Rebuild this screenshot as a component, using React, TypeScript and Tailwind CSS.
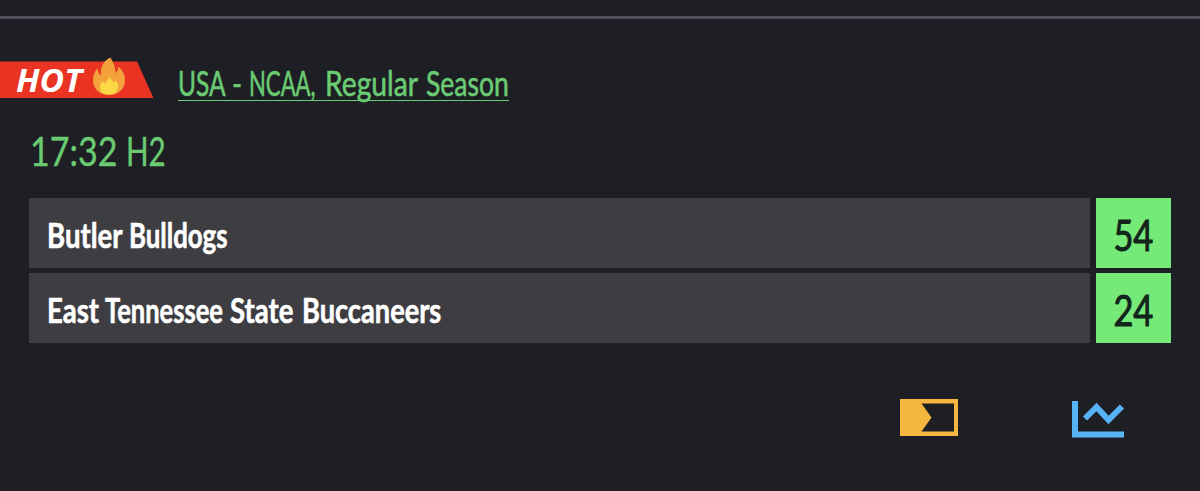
import React from 'react'

//Each word has its own slot (start to start) and its own condensing
type Word = { text: string, slot: string, scale: string }

const league: Word[] = [
  { text: "USA", slot: "w-[54px]", scale: "scale-x-[0.72]" },
  { text: "-", slot: "w-[17px]", scale: "scale-x-[0.8]" },
  { text: "NCAA,", slot: "w-[76px]", scale: "scale-x-[0.65]" },
  { text: "Regular", slot: "w-[101px]", scale: "scale-x-[0.83]" },
  { text: "Season", slot: "w-[83px]", scale: "scale-x-[0.78]" }
]

const clock: Word[] = [
  { text: "17:32", slot: "w-[96px]", scale: "scale-x-[0.85]" },
  { text: "H2", slot: "w-[40px]", scale: "scale-x-[0.74]" }
]

const teams = [
  {
    id: 1,
    score: 54,
    name: [
      { text: "Butler", slot: "w-[82px]", scale: "scale-x-[0.81]" },
      { text: "Bulldogs", slot: "w-[100px]", scale: "scale-x-[0.76]" }
    ]
  },
  {
    id: 2,
    score: 24,
    name: [
      { text: "East", slot: "w-[58px]", scale: "scale-x-[0.81]" },
      { text: "Tennessee", slot: "w-[125px]", scale: "scale-x-[0.75]" },
      { text: "State", slot: "w-[72px]", scale: "scale-x-[0.81]" },
      { text: "Buccaneers", slot: "w-[140px]", scale: "scale-x-[0.8]" }
    ]
  }
]

function Words({ words }: { words: Word[] }) {
  return (
    <span className="flex whitespace-pre">
      {words.map(word => (
        <span key={word.text} className={"shrink-0 " + word.slot}>
          <span className={"inline-block origin-left " + word.scale}>{word.text + " "}</span>
        </span>
      ))}
    </span>
  )
}

//Red ribbon with the flame sitting over its top edge
function HotBadge() {
  return (
    <div className="relative h-[42px] w-[154px] shrink-0">
      <svg className="absolute left-0 top-0" width="154" height="42" viewBox="0 0 154 42">
        <path d="M0 4.500H137L153.500 41H0Z" fill="#e93323" />
        <path d="M110.500 0.500C112 4 115.500 8 115.500 16C118 14 118.500 12 118 9.500C122.500 13 125 17 125 23C125 32 118 38 109 38C100 38 93 32 93 23C93 18 95 14 97.500 11C97.500 14 98.500 17 101 18.500C100 10 104 3 110.500 0.500Z" fill="#f2a13b" />
        <path d="M109.500 20C111 22 112.500 24 113.500 25.500C114.500 25 115 24.500 115.500 23.500C117.500 26 118.500 28 118 31C117 35.500 114 37.500 109 37.500C103.500 37.500 100.500 35 100 31C99.700 28 101 25.500 102.500 24C103 25 104 26 105 26.500C106.500 25 108 22.500 109.500 20Z" fill="#fbd944" />
      </svg>
      <span className="absolute left-4 top-[5px] origin-left scale-x-[1.02] text-[33px] leading-[36px] font-bold italic text-white font-['Open_Sans',sans-serif]">HOT</span>
    </div>
  )
}

function StreamIcon() {
  return (
    <svg width="58" height="37" viewBox="0 0 58 37">
      <path fillRule="evenodd" fill="#f5b740" d="M0 0H58V37H0ZM21.500 4.500L31.500 18.500L21.500 32.500H54V4.500Z" />
    </svg>
  )
}

function StatsIcon() {
  return (
    <svg width="53" height="37" viewBox="0 0 53 37" fill="none" stroke="#56b4f5">
      <path d="M3 0V33.500H52" strokeWidth="6" />
      <path d="M13 17.500L24.500 6L36.500 19L50 5.500" strokeWidth="6" />
    </svg>
  )
}

export default function App() {
  return (
    <main className="h-[491px] w-[1200px] overflow-hidden bg-[#1e1f24] font-[Lato,sans-serif]">
      <div className="h-[19px] border-b-[3px] border-[#50505b]" />

      <div className="flex pt-[38px]">
        <HotBadge />
        <a href="#" className="ml-6 mt-[5px] h-[39px] w-[331px] border-b border-[#6acb73] text-[34px] leading-[42px] text-[#6acb73] [-webkit-text-stroke:0.6px_#6acb73]">
          <Words words={league} />
        </a>
      </div>

      <div className="ml-[30px] mt-[23px] h-[52px] text-[40px] leading-[54px] text-[#6acb73] [-webkit-text-stroke:0.4px_#6acb73]">
        <Words words={clock} />
      </div>

      <div className="ml-[29px] mt-[22px] flex w-[1142px] flex-col gap-[5px]">
        {teams.map(team => (
          <div key={team.id} className="flex h-[70px] gap-[6px]">
            <div className="flex flex-1 items-center bg-[#3d3d42] pl-[18px] pt-[3px] text-[34px] leading-[42px] font-bold text-white [-webkit-text-stroke:0.6px_white]">
              <Words words={team.name} />
            </div>
            <div className="flex w-[75px] items-center justify-center bg-[#75ea79] pt-[3px]">
              <span className="inline-block scale-x-[0.82] text-[42px] leading-[50px] text-[#12251a] [-webkit-text-stroke:1px_#12251a]">{team.score}</span>
            </div>
          </div>
        ))}
      </div>

      <div className="mt-[56px] flex pl-[900px]">
        <StreamIcon />
        <div className="ml-[114px] mt-[2px]">
          <StatsIcon />
        </div>
      </div>
    </main>
  )
}
